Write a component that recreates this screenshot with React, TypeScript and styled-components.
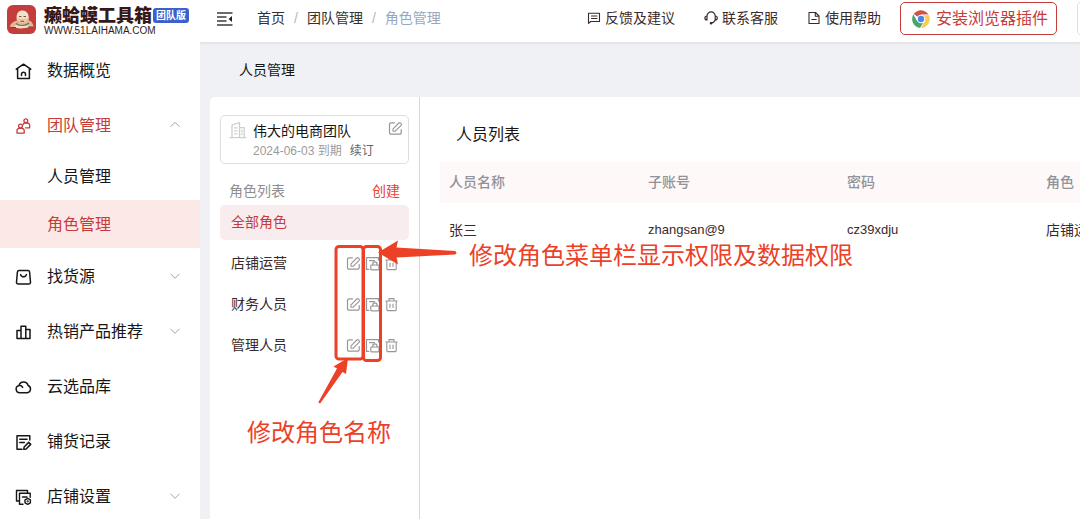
import React from "react";
import styled, { createGlobalStyle } from "styled-components";

const color = {
  brand: "#c63c3a",
  ink: "#161616",
  umber: "#3a2a2b",
  grey: "#8f8f8f",
  mark: "#ec4127",
};

const GlobalStyle = createGlobalStyle`
  * { box-sizing: border-box; }
  body {
    margin: 0;
    background: #f0f1f5;
    color: ${color.ink};
    font-family: "Liberation Sans", "Noto Sans CJK SC", sans-serif;
    font-size: 14px;
    line-height: 20px;
    overflow: hidden;
  }
  button { font: inherit; color: inherit; background: none; border: 0; padding: 0; cursor: pointer; }
  a { color: inherit; text-decoration: none; }
  ul, ol { list-style: none; margin: 0; padding: 0; }
  h1, h2, p { margin: 0; font-weight: 400; }
  svg { display: block; flex: none; }
`;

const Page = styled.div`
  position: relative;
  display: grid;
  grid-template-columns: 200px minmax(0, 1fr);
  min-height: 100vh;
  overflow: hidden;
`;

/* ---------- sidebar ---------- */

const Sidebar = styled.aside`
  background: #fff;
  height: 100vh;
  overflow: hidden;
`;

const Brand = styled.a`
  display: flex;
  gap: 8px;
  height: 42px;
  padding: 5px 0 0 7px;
`;

const BrandText = styled.div`
  display: flex;
  flex-direction: column;
  white-space: nowrap;
`;

const BrandName = styled.div`
  display: flex;
  align-items: center;
  gap: 1px;
  height: 21px;
  font-size: 18px;
  font-weight: 900;
  color: #35191a;
`;

const Edition = styled.span`
  padding: 0 3px;
  border-radius: 3px;
  background: #3c5fcb;
  color: #fff;
  font-size: 10px;
  font-weight: 700;
  line-height: 15px;
`;

const BrandUrl = styled.div`
  font-size: 10px;
  line-height: 10px;
  color: #35191a;
`;

const MenuButton = styled.button<{ $active?: boolean }>`
  display: flex;
  align-items: center;
  gap: 15px;
  width: 100%;
  height: 55px;
  padding: 3px 19px 0 15px;
  font-size: 16px;
  text-align: left;
  color: ${(p) => (p.$active ? color.brand : color.ink)};
`;

const MenuLabel = styled.span`
  flex: 1;
`;

const SubLink = styled.a<{ $active?: boolean }>`
  display: block;
  padding: 2px 0 0 47px;
  line-height: 46px;
  font-size: 16px;
  color: ${(p) => (p.$active ? color.brand : color.ink)};
  background: ${(p) => (p.$active ? "#fce8e6" : "transparent")};
`;

/* ---------- top bar ---------- */

const Main = styled.div`
  display: flex;
  flex-direction: column;
  min-width: 0;
  overflow: hidden;
`;

const TopBar = styled.header`
  display: flex;
  align-items: center;
  height: 42px;
  padding: 0 0 5px 16px;
  background: #fff;
  box-shadow: 0 1px 3px rgba(0, 21, 41, 0.1);
  white-space: nowrap;
`;

const Crumbs = styled.ol`
  display: flex;
  margin-left: 24px;
  padding-bottom: 1px;
`;

const Crumb = styled.li<{ $current?: boolean }>`
  color: ${(p) => (p.$current ? "#97a8be" : "#303133")};
  &:not(:last-child)::after {
    content: "/";
    margin: 0 9px;
    color: #b3b8c2;
  }
`;

const Tools = styled.nav`
  display: flex;
  align-items: center;
  margin-left: auto;
`;

const ToolLinks = styled.div`
  display: flex;
  gap: 29px;
  margin-right: 19px;
  padding-bottom: 1px;
`;

const ToolLink = styled.a`
  display: flex;
  align-items: center;
  gap: 4px;
  color: ${color.umber};
`;

const PluginButton = styled.button`
  display: flex;
  align-items: center;
  gap: 6px;
  height: 33px;
  padding: 0 8px 0 11px;
  border: 1px solid ${color.brand};
  border-radius: 5px;
  color: ${color.brand};
  font-size: 16px;
`;

const AccountButton = styled.button`
  width: 40px;
  height: 35px;
  margin: 0 -37px 0 20px;
  border: 1px solid #dcdfe6;
  border-radius: 5px;
`;

/* ---------- content ---------- */

const PageTitle = styled.h1`
  padding: 18px 0 17px 39px;
  font-size: 14px;
  line-height: 20px;
`;

const Panel = styled.div`
  display: flex;
  flex: 1;
  margin-left: 10px;
  background: #fff;
  border-top-left-radius: 5px;
`;

const RolePane = styled.section`
  flex: none;
  width: 210px;
  padding: 18px 10px 0;
  border-right: 1px solid #d8d8d8;
`;

const TeamCard = styled.div`
  display: flex;
  height: 49px;
  padding: 5px 5px 0 8px;
  border: 1px solid #dedede;
  border-radius: 5px;
`;

const TeamInfo = styled.div`
  flex: 1;
  margin-left: 6px;
  white-space: nowrap;
`;

const TeamMeta = styled.p`
  display: flex;
  gap: 8px;
  font-size: 12px;
  color: #9b9b9b;
`;

const RenewLink = styled.a`
  color: #666;
`;

const IconButton = styled.button`
  width: 15px;
  height: 15px;
  color: #979797;
`;

const RoleHead = styled.div`
  display: flex;
  justify-content: space-between;
  align-items: center;
  margin-top: 17px;
  padding: 0 9px;
  color: ${color.grey};
`;

const CreateButton = styled.button`
  color: #ea3f30;
`;

const RoleList = styled.ul`
  display: grid;
  gap: 6px;
  margin-top: 4px;
`;

const RoleRow = styled.li<{ $active?: boolean }>`
  display: flex;
  align-items: center;
  gap: 4px;
  height: 35px;
  padding: 0 10px 1px 11px;
  border-radius: 5px;
  color: ${(p) => (p.$active ? color.brand : color.umber)};
  background: ${(p) => (p.$active ? "#f8ecee" : "transparent")};
`;

const RoleName = styled.span`
  flex: 1;
`;

const StaffPane = styled.section`
  flex: 1;
  min-width: 0;
  padding: 27px 0 0 20px;
  overflow: hidden;
`;

const StaffTitle = styled.h2`
  padding-left: 16px;
  font-size: 16px;
  line-height: 22px;
`;

const StaffTable = styled.table`
  width: 100%;
  margin-top: 16px;
  table-layout: fixed;
  border-collapse: collapse;
  white-space: nowrap;
`;

const HeadCell = styled.th<{ $fill?: boolean }>`
  width: ${(p) => (p.$fill ? "auto" : "199px")};
  height: 41px;
  padding: 0 0 1px 9px;
  background: #fff8f8;
  color: #909399;
  font-weight: 500;
  text-align: left;
`;

const Cell = styled.td<{ $latin?: boolean }>`
  height: 55px;
  padding: 0 0 1px 9px;
  color: ${color.umber};
  font-size: ${(p) => (p.$latin ? "13px" : "14px")};
`;

/* ---------- hand-placed notes above the page ---------- */

const Marks = styled.svg`
  position: absolute;
  left: 310px;
  top: 235px;
  pointer-events: none;
`;

const Note = styled.p<{ $x: number; $y: number }>`
  position: absolute;
  left: ${(p) => p.$x}px;
  top: ${(p) => p.$y}px;
  font-size: 24px;
  line-height: 32px;
  white-space: nowrap;
  color: ${color.mark};
  pointer-events: none;
`;

/* ---------- icons ---------- */

type IconProps = { size?: number; box?: number; width?: number; children: React.ReactNode };

const Icon = ({ size = 17, box = 17, width = 1.5, children }: IconProps) => (
  <svg width={size} height={size} viewBox={`0 0 ${box} ${box}`} fill="none" stroke="currentColor"
    strokeWidth={width} strokeLinecap="round" strokeLinejoin="round" aria-hidden="true">
    {children}
  </svg>
);

const HomeIcon = () => (
  <Icon><path d="M1.3 6.2 8.5 1.2l7.2 5M2.6 5.6v9.800h11.8v-9.800M6.500 12.600v-1.400a2 2 0 0 1 4 0v1.400" /></Icon>
);
const TeamIcon = () => (
  <Icon width={1.3}>
    <circle cx="10.800" cy="2.800" r="1.900" />
    <path d="M8 6.800a2 2 0 0 1 1.800-1.800h2.600a2.300 2.300 0 0 1 2.300 2.300v2.500H10.500" />
    <circle cx="5.500" cy="8" r="1.900" />
    <path d="M2 15.200v-2.600a2.300 2.300 0 0 1 2.300-2.300h2.600a2.300 2.300 0 0 1 2.300 2.300v2.600z" />
  </Icon>
);
const BagIcon = () => (
  <Icon><path d="M4 1.600h9a1.600 1.600 0 0 1 1.600 1.400l.9 10.200a1.700 1.700 0 0 1-1.700 1.900H3.200a1.700 1.700 0 0 1-1.700-1.900L2.400 3A1.600 1.600 0 0 1 4 1.600zM5.600 5.600c.8 3 5 3 5.800 0" /></Icon>
);
const ChartIcon = () => (
  <Icon><path d="M2 6.500h4V14.500H2zM6 2.200h4.800v12.300H6zM10.800 5.500H15v9h-4.200z" /></Icon>
);
const CloudIcon = () => (
  <Icon><path d="M4.800 13.800a3.700 3.700 0 0 1-.8-7.300 4.700 4.700 0 0 1 9.100 0 3.800 3.800 0 0 1-.9 7.300zM4 6.500c1.800-.2 3.100.6 3.700 1.900" /></Icon>
);
const RecordIcon = () => (
  <Icon><path d="M14.800 6V1.700H2v13.600h5M4.800 5.200h7.200M4.800 8.600h4.500M8.800 15.300l.3-2.300 4.600-4.600 2 2-4.600 4.600z" /></Icon>
);
const StoreIcon = () => (
  <Icon width={1.400}>
    <path d="M3.600 12H1.500V1.500h11v2M8 15.300H4.500V4.200h10.700v4M7.500 8h4.500" />
    <path d="m12.700 9.300 2.700 1.500v3l-2.700 1.500-2.700-1.500v-3z" />
    <circle cx="12.700" cy="12.300" r=".4" />
  </Icon>
);
const Chevron = ({ up = false }: { up?: boolean }) => (
  <svg width="12" height="12" viewBox="0 0 12 12" fill="none" stroke="#a3a3a3" strokeWidth="1" aria-hidden="true">
    <path d={up ? "M1.500 6.800 6 2.300l4.500 4.500" : "M1.500 2.800 6 7.300l4.500-4.500"} />
  </svg>
);

const EditIcon = () => (
  <Icon size={15} box={15} width={1.200}>
    <path d="M6.500 1.800H3a1.500 1.500 0 0 0-1.500 1.500v8.400A1.500 1.500 0 0 0 3 13.200h8.700a1.500 1.500 0 0 0 1.500-1.500V8.500" />
    <path d="M5 10.200V7.800l5.800-5.800a1.100 1.100 0 0 1 1.600 0l.7.700a1.100 1.100 0 0 1 0 1.600L7.300 10.200z" strokeWidth="1.100" />
  </Icon>
);
const PermissionIcon = () => (
  <Icon size={15} box={15} width={1.200}>
    <path d="M13.500 4V1.600H1.500v11.800h2.300M4.500 4.600h5" />
    <rect x="5.800" y="9" width="8.200" height="4.800" rx=".8" />
    <path d="M7.800 8.800V8a2.100 2.100 0 0 1 4.200 0v.8" />
  </Icon>
);
const TrashIcon = () => (
  <Icon size={15} box={15} width={1.100}>
    <path d="M1.800 4h11.400M5 3.800V1.600h5v2.200M2.800 4.200v8.200a1.200 1.200 0 0 0 1.200 1.200h7a1.200 1.200 0 0 0 1.200-1.200V4.200M6 7v3.400M9 7v3.400" />
  </Icon>
);
const BuildingIcon = () => (
  <Icon size={18} box={18} width={1.300}>
    <g stroke="#cfcfcf">
      <path d="M1 16.700h16M3 16.500V4.200l7.500-2.700v15M10.500 6.700h4.700v9.800M5.500 6.800h2.300M5.500 9.800h2.300M5.500 12.800h2.300M12.300 10h1M12.300 13h1" />
    </g>
  </Icon>
);
const FeedbackIcon = () => (
  <Icon size={14} box={14} width={1.100}><path d="M1.500 12.300V2.200h11v8.300H3.800zM4.500 5h5.500M4.500 7.500h5.500" /></Icon>
);
const ServiceIcon = () => (
  <Icon size={14} box={14} width={1.200}>
    <path d="M3 8.900V5a4 4 0 0 1 8.200 0v3.900c-.4 1.700-1.900 2.800-4 3.300M3 5C.2 5 .2 8.900 3 8.900M11.200 5c2.800 0 2.800 3.900 0 3.900" />
    <circle cx="7" cy="12.300" r=".7" fill="currentColor" />
  </Icon>
);
const HelpIcon = () => (
  <Icon size={14} box={14} width={1.100}><path d="M2 1.500h6.500l3.500 3.500v7.500H2zM8.300 1.700v3.500h3.500M4.800 8.500h4.400" /></Icon>
);
const FoldIcon = () => (
  <svg width="17" height="16" viewBox="0 0 17 16" fill="none" stroke="#3c3c3c" strokeWidth="1.600" aria-hidden="true">
    <path d="M1 2h15.500M1 6h9.500M1 10h9.500M1 14h15.500" />
    <path d="M12.500 8 16 5v6z" fill="#222" stroke="none" />
  </svg>
);
const ChromeIcon = () => (
  <svg width="18" height="18" viewBox="0 0 18 18" aria-hidden="true">
    <path d="M9 9 1.600 4.100A9 9 0 0 1 16.800 4.900H9z" fill="#d0524a" />
    <path d="M9 4.900h7.800A9 9 0 0 1 8.400 18L12.600 11z" fill="#f6cf52" />
    <path d="M1.600 4.100A9 9 0 0 0 8.400 18l4.200-7L9 13 5.400 11z" fill="#4ba469" />
    <circle cx="9" cy="9" r="4.300" fill="#fff" />
    <circle cx="9" cy="9" r="3.200" fill="#4e83ec" />
    <path d="M1.600 4.100 5.200 10.500M8.400 18 12.600 11M9 4.800h7.800" stroke="#fff" strokeWidth=".8" />
  </svg>
);
const Mascot = () => (
  <svg width="29" height="30" viewBox="0 0 29 30" aria-hidden="true">
    <rect width="29" height="29" rx="6" fill="#c43c3b" />
    <path d="M10 16C8.500 9 11 6 15 5.500c5-.3 7.500 4 6.500 10z" fill="#efe2cd" />
    <path d="M10.500 13c1.500 1 3 .3 4 .5s4 .3 6-.8c.5 4-1.500 7-5 7s-5-3.500-5-6.700z" fill="#ecc5a1" />
    <path d="M3 22c0-3 3-5.500 7-6.500 2 3.500 8.500 3.500 11-.5 3.500 1 5.500 4 5.500 7z" fill="#e6b592" />
    <path d="M6 22.500c3-3.500 5-2 8.500-2s6-1.500 8.500 1.500c-4 1.500-12 2-17 .5z" fill="#f2dec0" />
    <path d="M12 11.500h2.500M16.500 11.500H19M13.500 16.300h3.500" stroke="#7b4f3c" strokeWidth="1" />
    <path d="M9 18.500c3 2.500 9 3 13-.5" fill="none" stroke="#4c7c70" strokeWidth="1.200" />
    <path d="M3 22.500h6M21 22h5" stroke="#6b4a32" strokeWidth="1" />
  </svg>
);

/* ---------- page ---------- */

const topMenu = [
  { label: "找货源", icon: <BagIcon />, more: true },
  { label: "热销产品推荐", icon: <ChartIcon />, more: true },
  { label: "云选品库", icon: <CloudIcon />, more: false },
  { label: "铺货记录", icon: <RecordIcon />, more: false },
  { label: "店铺设置", icon: <StoreIcon />, more: true },
];

const roles = ["店铺运营", "财务人员", "管理人员"];

export default function App() {
  return (
    <>
      <GlobalStyle />
      <Page>
        <Sidebar>
          <Brand href="#">
            <Mascot />
            <BrandText>
              <BrandName>癞蛤蟆工具箱<Edition>团队版</Edition></BrandName>
              <BrandUrl>WWW.51LAIHAMA.COM</BrandUrl>
            </BrandText>
          </Brand>
          <nav>
            <ul>
              <li><MenuButton><HomeIcon /><MenuLabel>数据概览</MenuLabel></MenuButton></li>
              <li>
                <MenuButton $active aria-expanded="true"><TeamIcon /><MenuLabel>团队管理</MenuLabel><Chevron up /></MenuButton>
                <SubLink href="#">人员管理</SubLink>
                <SubLink href="#" $active>角色管理</SubLink>
              </li>
              {topMenu.map((m) => (
                <li key={m.label}>
                  <MenuButton>{m.icon}<MenuLabel>{m.label}</MenuLabel>{m.more && <Chevron />}</MenuButton>
                </li>
              ))}
            </ul>
          </nav>
        </Sidebar>

        <Main>
          <TopBar>
            <button aria-label="收起菜单"><FoldIcon /></button>
            <Crumbs>
              <Crumb><a href="#">首页</a></Crumb>
              <Crumb><a href="#">团队管理</a></Crumb>
              <Crumb $current>角色管理</Crumb>
            </Crumbs>
            <Tools>
              <ToolLinks>
                <ToolLink href="#"><FeedbackIcon />反馈及建议</ToolLink>
                <ToolLink href="#"><ServiceIcon />联系客服</ToolLink>
                <ToolLink href="#"><HelpIcon />使用帮助</ToolLink>
              </ToolLinks>
              <PluginButton><ChromeIcon />安装浏览器插件</PluginButton>
              <AccountButton aria-label="账号" />
            </Tools>
          </TopBar>

          <PageTitle>人员管理</PageTitle>

          <Panel>
            <RolePane>
              <TeamCard>
                <BuildingIcon />
                <TeamInfo>
                  <p>伟大的电商团队</p>
                  <TeamMeta>2024-06-03 到期<RenewLink href="#">续订</RenewLink></TeamMeta>
                </TeamInfo>
                <IconButton aria-label="编辑团队"><EditIcon /></IconButton>
              </TeamCard>
              <RoleHead>角色列表<CreateButton>创建</CreateButton></RoleHead>
              <RoleList>
                <RoleRow $active><RoleName>全部角色</RoleName></RoleRow>
                {roles.map((role) => (
                  <RoleRow key={role}>
                    <RoleName>{role}</RoleName>
                    <IconButton aria-label="编辑"><EditIcon /></IconButton>
                    <IconButton aria-label="权限"><PermissionIcon /></IconButton>
                    <IconButton aria-label="删除"><TrashIcon /></IconButton>
                  </RoleRow>
                ))}
              </RoleList>
            </RolePane>

            <StaffPane>
              <StaffTitle>人员列表</StaffTitle>
              <StaffTable>
                <thead>
                  <tr>
                    <HeadCell>人员名称</HeadCell>
                    <HeadCell>子账号</HeadCell>
                    <HeadCell>密码</HeadCell>
                    <HeadCell $fill>角色</HeadCell>
                  </tr>
                </thead>
                <tbody>
                  <tr>
                    <Cell>张三</Cell>
                    <Cell $latin>zhangsan@9</Cell>
                    <Cell $latin>cz39xdju</Cell>
                    <Cell>店铺运营</Cell>
                  </tr>
                </tbody>
              </StaffTable>
            </StaffPane>
          </Panel>
        </Main>

        <Marks width="150" height="172" viewBox="310 235 150 172" fill="none" stroke={color.mark} strokeWidth="3" aria-hidden="true">
          <rect x="336" y="246.500" width="27" height="112.500" rx="3" />
          <rect x="363.500" y="246.500" width="17" height="114" rx="3" />
          <path d="M378 252.500 398 240.500 396.500 247.500 455 251Q458 253 455 254.500L396.500 257.500 398 264.500z" fill={color.mark} stroke="none" />
          <path d="M348 358 333.500 366.500 337 368.500 318.500 402Q318.500 404 320.500 403L342.500 372 346 374z" fill={color.mark} stroke="none" />
        </Marks>
        <Note $x={469} $y={240}>修改角色菜单栏显示权限及数据权限</Note>
        <Note $x={247} $y={417}>修改角色名称</Note>
      </Page>
    </>
  );
}
